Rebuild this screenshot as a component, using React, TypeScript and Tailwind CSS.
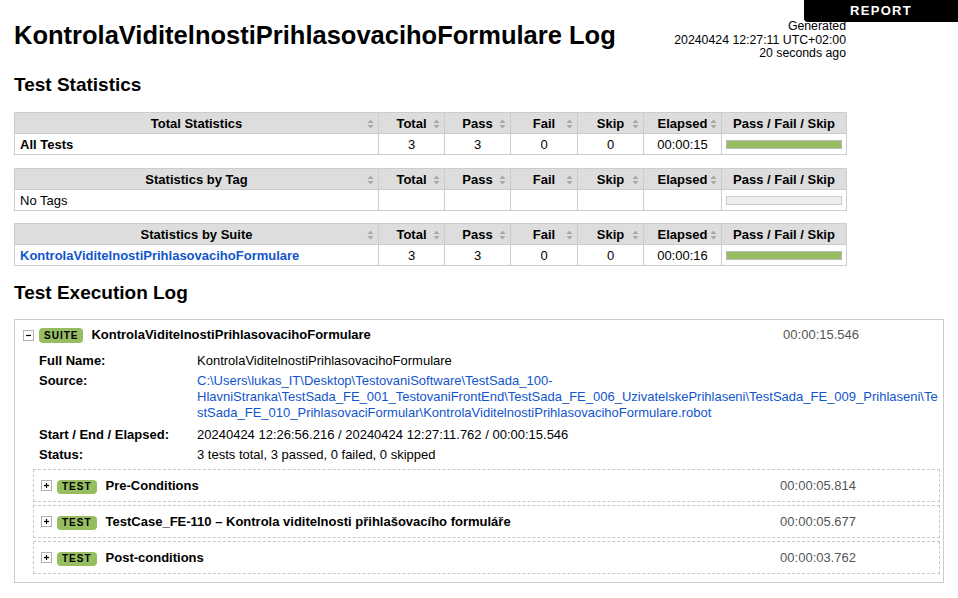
import React from "react";

function SortIcon() {
  return (
    <svg
      width="7"
      height="10"
      viewBox="0 0 7 10"
      className="absolute right-[4px] top-[6px]"
    >
      <path d="M0.5 4 L3.5 0.5 L6.5 4 Z" fill="#a8a8a8" />
      <path d="M0.5 6 L3.5 9.5 L6.5 6 Z" fill="#a8a8a8" />
    </svg>
  );
}

function Th({ children, sort = true }: { children: React.ReactNode; sort?: boolean }) {
  return (
    <th className="relative h-[21px] border border-[#ccc] bg-[#ddd] p-0 text-center font-bold leading-[15px]">
      {children}
      {sort && <SortIcon />}
    </th>
  );
}

function Td({ children, className = "" }: { children?: React.ReactNode; className?: string }) {
  return (
    <td className={"h-[21px] border border-[#ccc] px-[5px] py-0 leading-[15px] " + className}>
      {children}
    </td>
  );
}

type Row = {
  name: React.ReactNode;
  total: string;
  pass: string;
  fail: string;
  skip: string;
  elapsed: string;
  graph: "pass" | "empty";
};

function StatTable({ title, row, className = "" }: { title: string; row: Row; className?: string }) {
  return (
    <table className={"w-[832px] table-fixed border-collapse " + className}>
      <colgroup>
        <col className="w-[364px]" />
        <col className="w-[66px]" />
        <col className="w-[66px]" />
        <col className="w-[67px]" />
        <col className="w-[66px]" />
        <col className="w-[78px]" />
        <col className="w-[125px]" />
      </colgroup>
      <thead>
        <tr>
          <Th>{title}</Th>
          <Th>Total</Th>
          <Th>Pass</Th>
          <Th>Fail</Th>
          <Th>Skip</Th>
          <Th>Elapsed</Th>
          <Th sort={false}>Pass / Fail / Skip</Th>
        </tr>
      </thead>
      <tbody>
        <tr>
          <Td className="text-left">{row.name}</Td>
          <Td className="text-center">{row.total}</Td>
          <Td className="text-center">{row.pass}</Td>
          <Td className="text-center">{row.fail}</Td>
          <Td className="text-center">{row.skip}</Td>
          <Td className="text-center">{row.elapsed}</Td>
          <td className="h-[21px] border border-[#ccc] px-[4px] py-0">
            {row.graph === "pass" ? (
              <div className="h-[9px] border border-[#bbb] bg-[#97bd61]" />
            ) : (
              <div className="h-[9px] border border-[#ccc] bg-[#eee]" />
            )}
          </td>
        </tr>
      </tbody>
    </table>
  );
}

function Toggle({ minus = false }: { minus?: boolean }) {
  return (
    <svg width="11" height="11" viewBox="0 0 11 11" className="shrink-0">
      <rect x="0.5" y="0.5" width="10" height="10" fill="#fff" stroke="#b0b0b0" />
      <path d="M3 5.5 H8" stroke="#000" strokeWidth="1.2" />
      {!minus && <path d="M5.5 3 V8" stroke="#000" strokeWidth="1.2" />}
    </svg>
  );
}

function Badge({ text, tall = false }: { text: string; tall?: boolean }) {
  return (
    <span
      className={
        "inline-block shrink-0 rounded-[4px] bg-[#97bd61] px-[5px] text-[10px] font-bold tracking-[1px] text-black " +
        (tall ? "py-[2px] leading-[11px]" : "py-[2px] leading-[10px]")
      }
    >
      {text}
    </span>
  );
}

function TestRow({ name, elapsed, last = false }: { name: string; elapsed: string; last?: boolean }) {
  return (
    <div
      className={
        "flex h-[33px] items-center border border-dashed border-[#c8c8c8] pl-[7px] pr-[83px] " +
        (last ? "" : "mb-[3px]")
      }
    >
      <Toggle />
      <span className="ml-[5px]">
        <Badge text="TEST" />
      </span>
      <span className="ml-[9px] font-bold">{name}</span>
      <span className="ml-auto text-[#555]">{elapsed}</span>
    </div>
  );
}

function MetaRow({ label, children, className = "" }: { label: string; children: React.ReactNode; className?: string }) {
  return (
    <div className={"flex py-[2px] leading-[16px] " + className}>
      <div className="w-[158px] shrink-0 font-bold">{label}</div>
      <div>{children}</div>
    </div>
  );
}

export default function App() {
  return (
    <div className="relative min-h-[598px] w-[958px] overflow-hidden bg-white pl-[14px] font-['Liberation_Sans',Arial,sans-serif] text-[13px] text-black">
      <div className="absolute right-0 top-0 z-10 h-[22px] w-[154px] rounded-bl-[4px] bg-black text-center text-[13px] font-bold leading-[22px] tracking-[1.3px] text-white">
        REPORT
      </div>

      <div className="flex h-[60px] w-[832px] items-start justify-between pt-[20px]">
        <h1 className="text-[25.5px] font-bold leading-[30px]">
          KontrolaViditelnostiPrihlasovacihoFormulare Log
        </h1>
        <div className="text-right text-[12.3px] leading-[13.5px]">
          <div>Generated</div>
          <div>20240424 12:27:11 UTC+02:00</div>
          <div>20 seconds ago</div>
        </div>
      </div>

      <h2 className="mt-[14px] text-[19px] font-bold leading-[22px]">Test Statistics</h2>

      <StatTable
        className="mt-[16px]"
        title="Total Statistics"
        row={{
          name: <span className="font-bold">All Tests</span>,
          total: "3",
          pass: "3",
          fail: "0",
          skip: "0",
          elapsed: "00:00:15",
          graph: "pass",
        }}
      />
      <StatTable
        className="mt-[13px]"
        title="Statistics by Tag"
        row={{
          name: "No Tags",
          total: "",
          pass: "",
          fail: "",
          skip: "",
          elapsed: "",
          graph: "empty",
        }}
      />
      <StatTable
        className="mt-[12px]"
        title="Statistics by Suite"
        row={{
          name: (
            <span className="font-bold text-[#15c]">KontrolaViditelnostiPrihlasovacihoFormulare</span>
          ),
          total: "3",
          pass: "3",
          fail: "0",
          skip: "0",
          elapsed: "00:00:16",
          graph: "pass",
        }}
      />

      <h2 className="mt-[16px] text-[19px] font-bold leading-[22px]">Test Execution Log</h2>

      <div className="mt-[15px] w-[930px] border border-[#ccc] pb-[8px] pt-[6px]">
        <div className="flex h-[18px] items-center pl-[8px] pr-[84px]">
          <Toggle minus />
          <span className="ml-[5px]">
            <Badge text="SUITE" tall />
          </span>
          <span className="ml-[8px] font-bold">KontrolaViditelnostiPrihlasovacihoFormulare</span>
          <span className="ml-auto text-[#555]">00:00:15.546</span>
        </div>

        <div className="ml-[24px] mt-[7px]">
          <MetaRow label="Full Name:">KontrolaViditelnostiPrihlasovacihoFormulare</MetaRow>
          <MetaRow label="Source:" className="pb-[4px]">
            <div className="whitespace-nowrap text-[#15c]">
              <div>C:\Users\lukas_IT\Desktop\TestovaniSoftware\TestSada_100-</div>
              <div>
                HlavniStranka\TestSada_FE_001_TestovaniFrontEnd\TestSada_FE_006_UzivatelskePrihlaseni\TestSada_FE_009_Prihlaseni\Te
              </div>
              <div>stSada_FE_010_PrihlasovaciFormular\KontrolaViditelnostiPrihlasovacihoFormulare.robot</div>
            </div>
          </MetaRow>
          <MetaRow label="Start / End / Elapsed:">
            20240424 12:26:56.216 / 20240424 12:27:11.762 / 00:00:15.546
          </MetaRow>
          <MetaRow label="Status:">3 tests total, 3 passed, 0 failed, 0 skipped</MetaRow>
        </div>

        <div className="ml-[18px] mr-[3px] mt-[4px]">
          <TestRow name="Pre-Conditions" elapsed="00:00:05.814" />
          <TestRow name="TestCase_FE-110 – Kontrola viditelnosti přihlašovacího formuláře" elapsed="00:00:05.677" />
          <TestRow name="Post-conditions" elapsed="00:00:03.762" last />
        </div>
      </div>
    </div>
  );
}
